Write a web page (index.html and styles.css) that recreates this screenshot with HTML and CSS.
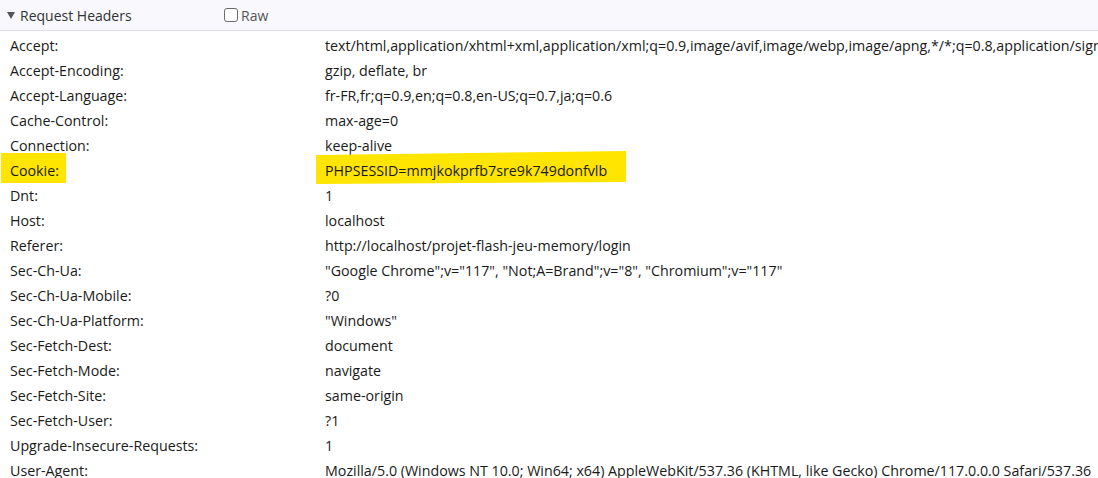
FILE: index.html
```html
<!DOCTYPE html>
<html>
<head>
<meta charset="utf-8">
<link rel="stylesheet" href="styles.css">
</head>
<body>
<div class="panel">
  <div class="bar">
    <div class="toggle"><span class="tri"></span><span class="title">Request Headers</span></div>
    <label class="raw"><span class="box"></span><span>Raw</span></label>
  </div>
  <div class="rows">
    <div class="row"><span class="name">Accept:</span><span class="value">text/html,application/xhtml+xml,application/xml;q=0.9,image/avif,image/webp,image/apng,*/*;q=0.8,application/signed-exchange;v=b3;q=0.7</span></div>
    <div class="row"><span class="name">Accept-Encoding:</span><span class="value">gzip, deflate, br</span></div>
    <div class="row"><span class="name">Accept-Language:</span><span class="value">fr-FR,fr;q=0.9,en;q=0.8,en-US;q=0.7,ja;q=0.6</span></div>
    <div class="row"><span class="name">Cache-Control:</span><span class="value">max-age=0</span></div>
    <div class="row"><span class="name">Connection:</span><span class="value">keep-alive</span></div>
    <div class="row"><span class="name"><span class="mark-name">Cookie:</span></span><span class="value"><span class="mark-value">PHPSESSID=mmjkokprfb7sre9k749donfvlb</span></span></div>
    <div class="row"><span class="name">Dnt:</span><span class="value">1</span></div>
    <div class="row"><span class="name">Host:</span><span class="value">localhost</span></div>
    <div class="row"><span class="name">Referer:</span><span class="value">http://localhost/projet-flash-jeu-memory/login</span></div>
    <div class="row"><span class="name">Sec-Ch-Ua:</span><span class="value">"Google Chrome";v="117", "Not;A=Brand";v="8", "Chromium";v="117"</span></div>
    <div class="row"><span class="name">Sec-Ch-Ua-Mobile:</span><span class="value">?0</span></div>
    <div class="row"><span class="name">Sec-Ch-Ua-Platform:</span><span class="value">"Windows"</span></div>
    <div class="row"><span class="name">Sec-Fetch-Dest:</span><span class="value">document</span></div>
    <div class="row"><span class="name">Sec-Fetch-Mode:</span><span class="value">navigate</span></div>
    <div class="row"><span class="name">Sec-Fetch-Site:</span><span class="value">same-origin</span></div>
    <div class="row"><span class="name">Sec-Fetch-User:</span><span class="value">?1</span></div>
    <div class="row"><span class="name">Upgrade-Insecure-Requests:</span><span class="value">1</span></div>
    <div class="row"><span class="name">User-Agent:</span><span class="value">Mozilla/5.0 (Windows NT 10.0; Win64; x64) AppleWebKit/537.36 (KHTML, like Gecko) Chrome/117.0.0.0 Safari/537.36</span></div>
  </div>
</div>
</body>
</html>
```
FILE: styles.css
```css
html, body {
  margin: 0;
  padding: 0;
  background: #ffffff;
  overflow: hidden;
}
body {
  font-family: "Open Sans", "Noto Sans", sans-serif;
  font-size: 14.25px;
  color: #1a1a1a;
  width: 1098px;
  height: 478px;
}
.panel {
  width: 1098px;
  overflow: hidden;
}
.bar {
  height: 31px;
  background: #f8f8fd;
  border-bottom: 1px solid #dcdcf4;
  display: flex;
  align-items: center;
  box-sizing: border-box;
}
.toggle {
  display: flex;
  align-items: center;
  width: 224px;
  padding-left: 7px;
  box-sizing: border-box;
}
.tri {
  width: 0;
  height: 0;
  border-left: 4px solid transparent;
  border-right: 4px solid transparent;
  border-top: 7px solid #555;
  margin-right: 5px;
}
.title {
  color: #333;
  font-size: 14px;
}
.raw {
  display: flex;
  align-items: center;
  color: #555;
  font-size: 14px;
}
.box {
  width: 14px;
  height: 14px;
  border: 1px solid #6b6b6b;
  border-radius: 3px;
  background: #fff;
  margin-right: 3px;
  box-sizing: border-box;
}
.rows {
  padding-top: 2px;
}
.row {
  display: flex;
  height: 25px;
  align-items: center;
  white-space: nowrap;
}
.name {
  width: 325px;
  flex: none;
  padding-left: 10px;
  box-sizing: border-box;
}
.value {
  flex: none;
}
.mark-name,
.mark-value {
  position: relative;
  display: inline-block;
  z-index: 0;
}
.mark-name::before {
  content: "";
  position: absolute;
  left: -9px;
  top: -8px;
  width: 65px;
  height: 30px;
  background: #ffe500;
  z-index: -1;
}
.mark-value::before {
  content: "";
  position: absolute;
  left: -9px;
  top: -10px;
  width: 310px;
  height: 33px;
  background: #ffe500;
  clip-path: polygon(0 4px, 100% 0, 100% 31px, 0 100%);
  z-index: -1;
}
```
